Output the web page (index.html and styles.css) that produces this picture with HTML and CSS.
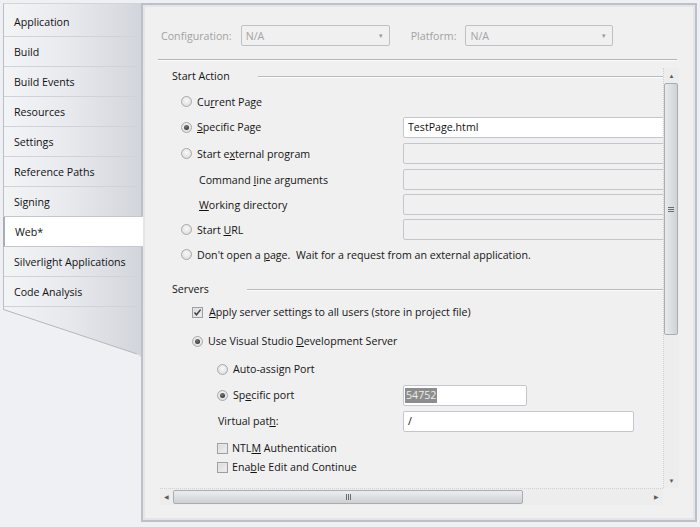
FILE: index.html
```html
<!DOCTYPE html>
<html>
<head>
<meta charset="utf-8">
<link rel="stylesheet" href="styles.css">
</head>
<body>
<div class="window">
  <nav class="sidebar">
    <div class="tabs">
      <div class="tab">Application</div>
      <div class="tab">Build</div>
      <div class="tab">Build Events</div>
      <div class="tab">Resources</div>
      <div class="tab">Settings</div>
      <div class="tab">Reference Paths</div>
      <div class="tab">Signing</div>
      <div class="tab active">Web*</div>
      <div class="tab">Silverlight Applications</div>
      <div class="tab">Code Analysis</div>
    </div>
    <svg class="tail" width="138" height="50" viewBox="0 0 138 50">
      <defs>
        <linearGradient id="tg" x1="0" x2="1" y1="0" y2="0">
          <stop offset="0" stop-color="#f2f3f6"/>
          <stop offset="0.45" stop-color="#e7e9ed"/>
          <stop offset="1" stop-color="#d2d5db"/>
        </linearGradient>
      </defs>
      <polygon points="0,0 138,0 138,50 134,47 0,2" fill="url(#tg)"/>
      <line x1="0.5" y1="0" x2="0.5" y2="2.5" stroke="#b9bdc5"/>
      <line x1="0.5" y1="2.5" x2="134" y2="47" stroke="#b3b7bf"/>
    </svg>
  </nav>

  <section class="panel">
    <div class="config-row">
      <span class="dim-label">Configuration:</span>
      <div class="select sel-config"><span>N/A</span><span class="caret">▾</span></div>
      <span class="dim-label plat">Platform:</span>
      <div class="select sel-platform"><span>N/A</span><span class="caret">▾</span></div>
    </div>
    <div class="rule"></div>

    <div class="scroller">
      <div class="viewport">
        <div class="content">
          <div class="group-head"><span>Start Action</span><span class="head-line sa"></span></div>
          <div class="rows">
            <div class="row h25">
              <div class="lab ind1"><span class="radio"></span><span>Cu<u>r</u>rent Page</span></div>
            </div>
            <div class="row h26">
              <div class="lab ind1"><span class="radio on"></span><span><u>S</u>pecific Page</span></div>
              <div class="tb wide white">TestPage.html</div>
            </div>
            <div class="row h27">
              <div class="lab ind1"><span class="radio"></span><span>Start e<u>x</u>ternal program</span></div>
              <div class="tb wide"></div>
            </div>
            <div class="row h25">
              <div class="lab ind1b"><span>Command <u>l</u>ine arguments</span></div>
              <div class="tb wide"></div>
            </div>
            <div class="row h25">
              <div class="lab ind1b"><span><u>W</u>orking directory</span></div>
              <div class="tb wide"></div>
            </div>
            <div class="row h25">
              <div class="lab ind1"><span class="radio"></span><span>Start <u>U</u>RL</span></div>
              <div class="tb wide"></div>
            </div>
            <div class="row h25">
              <div class="lab ind1 free"><span class="radio"></span><span>Don't open a <u>p</u>age.&nbsp; Wait for a request from an external application.</span></div>
            </div>
          </div>

          <div class="group-head servers"><span>Servers</span><span class="head-line sv"></span></div>
          <div class="row h24 m3">
            <div class="lab ind2 free"><span class="check on"><svg width="9" height="9" viewBox="0 0 9 9"><path d="M1.5 4.5 L3.5 6.8 L7.6 1.6" fill="none" stroke="#3c3c3c" stroke-width="1.4"/></svg></span><span class="gap6"><u>A</u>pply server settings to all users (store in project file)</span></div>
          </div>
          <div class="row h24 m5">
            <div class="lab ind2 free"><span class="radio on"></span><span>Use Visual Studio <u>D</u>evelopment Server</span></div>
          </div>
          <div class="row h24 m4">
            <div class="lab ind3"><span class="radio"></span><span>Auto-assi<u>g</u>n Port</span></div>
          </div>
          <div class="row h24 m2">
            <div class="lab ind3"><span class="radio on"></span><span>Sp<u>e</u>cific port</span></div>
            <div class="tb white port"><span class="selected">54752</span></div>
          </div>
          <div class="row h24 m2">
            <div class="lab ind3b"><span>Virtual pat<u>h</u>:</span></div>
            <div class="tb white vpath">/</div>
          </div>
          <div class="row h20 m5">
            <div class="lab ind3 free"><span class="check"></span><span class="gap4">NTL<u>M</u> Authentication</span></div>
          </div>
          <div class="row h18">
            <div class="lab ind3 free"><span class="check"></span><span class="gap4">Ena<u>b</u>le Edit and Continue</span></div>
          </div>
        </div>
      </div>

      <div class="vscroll">
        <div class="arrow up">▲</div>
        <div class="vtrack">
          <div class="vthumb"><span class="vgrip"></span></div>
        </div>
        <div class="arrow down">▼</div>
      </div>

      <div class="hscroll">
        <div class="harrow left">◀</div>
        <div class="htrack">
          <div class="hthumb"><span class="hgrip"></span></div>
        </div>
        <div class="harrow right">▶</div>
      </div>
      <div class="corner"></div>
    </div>
  </section>
</div>
</body>
</html>
```

FILE: styles.css
```css
* { box-sizing: border-box; }
html, body { margin: 0; padding: 0; }
body {
  width: 700px;
  height: 527px;
  overflow: hidden;
  background: #eef0f4;
  font-family: "Open Sans", "Noto Sans", sans-serif;
  font-size: 10.65px;
  color: #141414;
}
u { text-decoration: underline; text-underline-offset: 1px; }

.window {
  display: flex;
  align-items: flex-start;
  padding-top: 3px;
  height: 527px;
}

/* ---------- sidebar ---------- */
.sidebar {
  width: 138px;
  margin-left: 3px;
  display: flex;
  flex-direction: column;
  position: relative;
  z-index: 2;
}
.tabs {
  background: linear-gradient(90deg, #f3f4f6 0%, #e8eaee 45%, #d2d5db 100%);
  border-left: 1px solid #b9bdc5;
  border-top: 1px solid #d2d5db;
  padding-top: 3px;
}
.tab {
  height: 30px;
  margin-right: 4px;
  padding-left: 10px;
  display: flex;
  align-items: center;
  border-bottom: 1px solid #cfd2d8;
  color: #111;
  white-space: nowrap;
}
.tab.active {
  background: #ffffff;
  margin-right: -2px;
  margin-left: -1px;
  padding-left: 10px;
  border-left: 2px solid #a9adb5;
  border-bottom: 1px solid #c3c7ce;
  box-shadow: 0 -1px 0 #c3c7ce;
}
.tail { display: block; }

/* ---------- panel ---------- */
.panel {
  width: 556px;
  height: 519px;
  background: #f0f0f0;
  border: 2px solid #bcc0c8;
  box-shadow: inset 0 0 0 2px #e3e5e9;
  padding: 20px 18px 0 15px;
  display: flex;
  flex-direction: column;
}
.config-row {
  display: flex;
  align-items: center;
  height: 21px;
  padding-left: 3px;
}
.dim-label { color: #a2a2a2; }
.plat { margin-left: 21px; }
.select {
  height: 21px;
  border: 1px solid #bcc0c7;
  border-radius: 2px;
  background: #f0f0f0;
  color: #a4a4a4;
  display: flex;
  align-items: center;
  justify-content: space-between;
  padding: 0 6px 0 4px;
}
.sel-config { width: 149px; margin-left: 9px; }
.sel-platform { width: 148px; margin-left: 9px; }
.caret { font-size: 7px; color: #9a9a9a; }

.rule {
  height: 2px;
  margin-top: 13px;
  border-top: 1px solid #b4b6ba;
  border-bottom: 1px solid #fbfbfb;
}

/* ---------- scroller ---------- */
.scroller {
  margin-top: 7px;
  margin-left: 2px;
  width: 519px;
  height: 437px;
  display: grid;
  grid-template-columns: 503px 16px;
  grid-template-rows: 420px 17px;
}
.viewport {
  overflow: hidden;
  grid-column: 1;
  grid-row: 1;
}
.content { padding-left: 12px; }

.group-head {
  height: 16px;
  display: flex;
  align-items: center;
}
.head-line {
  flex: 1;
  height: 1px;
  background: #b8babd;
  box-shadow: 0 1px 0 #fcfcfc;
}
.head-line.sa { margin-left: 28px; }
.head-line.sv { margin-left: 38px; }
.group-head.servers { margin-top: 14px; }

.rows { margin-top: 5px; }
.row { display: flex; align-items: center; }
.h18 { height: 18px; }
.h20 { height: 20px; }
.h24 { height: 24px; }
.h25 { height: 25px; }
.h26 { height: 26px; }
.h27 { height: 27px; }
.m2 { margin-top: 2px; }
.m3 { margin-top: 3px; }
.m4 { margin-top: 4px; }
.m5 { margin-top: 5px; }

.lab {
  width: 231px;
  flex: none;
  display: flex;
  align-items: center;
  white-space: nowrap;
}
.lab.free { width: auto; }
.ind1 { padding-left: 9px; }
.ind1b { padding-left: 27px; }
.ind2 { padding-left: 20px; }
.ind3 { padding-left: 45px; }
.ind3b { padding-left: 46px; }

.radio {
  width: 11px;
  height: 11px;
  border-radius: 50%;
  border: 1px solid #a6a9ad;
  background: radial-gradient(circle at 50% 40%, #fafafa 0%, #e4e4e4 60%, #d6d6d6 100%);
  margin-right: 5px;
  flex: none;
  position: relative;
}
.radio.on::after {
  content: "";
  position: absolute;
  left: 2px;
  top: 2px;
  width: 5px;
  height: 5px;
  border-radius: 50%;
  background: radial-gradient(circle at 40% 35%, #7a7a7a 0%, #333 80%);
}

.check {
  width: 11px;
  height: 11px;
  border: 1px solid #9c9fa3;
  background: linear-gradient(135deg, #d8d8d8, #f2f2f2);
  box-shadow: inset 0 0 0 1px #e6e6e6;
  flex: none;
  display: flex;
  align-items: center;
  justify-content: center;
}
.gap6 { margin-left: 6px; }
.gap4 { margin-left: 4px; }

.tb {
  height: 21px;
  border: 1px solid #c3c7cd;
  border-radius: 2px;
  background: #f0f0f0;
  flex: none;
  display: flex;
  align-items: center;
  padding-left: 4px;
  color: #111;
}
.tb.white { background: #ffffff; }
.tb.wide { width: 290px; }
.tb.port { width: 124px; padding-left: 1px; }
.tb.vpath { width: 231px; }
.selected {
  background: #8d8d8d;
  color: #ececec;
  padding: 0 1px;
  line-height: 15px;
}

/* vertical scrollbar */
.vscroll {
  grid-column: 2;
  grid-row: 1;
  display: flex;
  flex-direction: column;
  background: #ededed;
  border-left: 1px dotted #d2d2d2;
}
.arrow {
  height: 15px;
  font-size: 6px;
  color: #5c5c5c;
  display: flex;
  align-items: center;
  justify-content: center;
}
.vtrack {
  flex: 1;
  background-image: radial-gradient(#d8d8d8 0.6px, transparent 0.7px);
  background-size: 4px 4px;
}
.vthumb {
  height: 252px;
  margin: 0 1px 0 0;
  border: 1px solid #a9adb3;
  border-radius: 2px;
  background: linear-gradient(90deg, #e9eaec, #dcdee1 50%, #d0d3d7);
  display: flex;
  align-items: center;
  justify-content: center;
}
.vgrip {
  width: 6px;
  height: 5px;
  border-top: 1px solid #6a6a6a;
  border-bottom: 1px solid #6a6a6a;
  position: relative;
}
.vgrip::after {
  content: "";
  position: absolute;
  left: 0;
  right: 0;
  top: 1px;
  border-top: 1px solid #6a6a6a;
}

/* horizontal scrollbar */
.hscroll {
  grid-column: 1;
  grid-row: 2;
  display: flex;
  align-items: stretch;
  background: #ededed;
  border-top: 1px dotted #d2d2d2;
}
.harrow {
  width: 13px;
  font-size: 6px;
  color: #5c5c5c;
  display: flex;
  align-items: center;
  justify-content: center;
}
.htrack {
  flex: 1;
  padding-top: 1px;
  background-image: radial-gradient(#d8d8d8 0.6px, transparent 0.7px);
  background-size: 4px 4px;
}
.hthumb {
  width: 350px;
  height: 14px;
  border: 1px solid #a9adb3;
  border-radius: 2px;
  background: linear-gradient(180deg, #ecedee, #dcdee1 50%, #cdd0d4);
  display: flex;
  align-items: center;
  justify-content: center;
}
.hgrip {
  width: 5px;
  height: 6px;
  border-left: 1px solid #6a6a6a;
  border-right: 1px solid #6a6a6a;
  position: relative;
}
.hgrip::after {
  content: "";
  position: absolute;
  top: 0;
  bottom: 0;
  left: 1px;
  border-left: 1px solid #6a6a6a;
}
.corner {
  grid-column: 2;
  grid-row: 2;
  background: #f0f0f0;
}
```
